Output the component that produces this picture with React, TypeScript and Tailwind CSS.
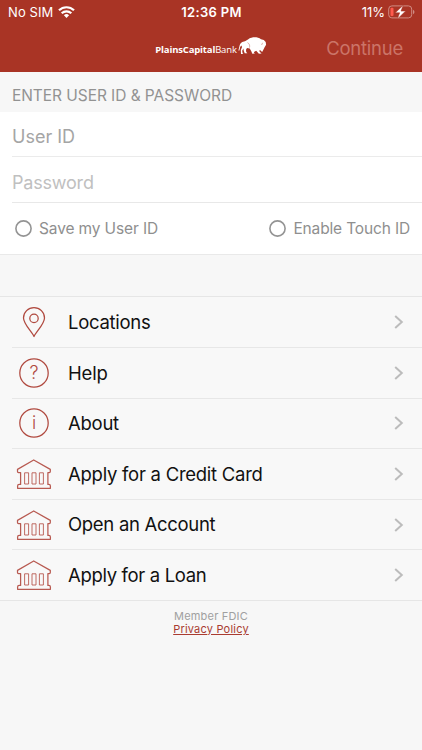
import { useState } from "react";

type MenuItem = { label: string; icon: "pin" | "help" | "info" | "bank"; text: string };

const MENU: MenuItem[] = [
  { label: "Locations", icon: "pin", text: "tracking-[-0.28px]" },
  { label: "Help", icon: "help", text: "tracking-[-0.2px]" },
  { label: "About", icon: "info", text: "tracking-[-0.25px]" },
  { label: "Apply for a Credit Card", icon: "bank", text: "tracking-[-0.26px]" },
  { label: "Open an Account", icon: "bank", text: "tracking-[-0.3px]" },
  { label: "Apply for a Loan", icon: "bank", text: "tracking-[-0.34px]" },
];

function PinIcon() {
  return (
    <svg width="24" height="32" viewBox="0 0 24 32" fill="none" stroke="#b0493f" strokeWidth="1.250" strokeLinejoin="round">
      <path d="M12 30.500C10.500 26.500 1.500 18 1.500 11.900a10.500 10.300 0 0 1 21 0C22.500 18 13.500 26.500 12 30.500Z" />
      <circle cx="12" cy="12.400" r="4.200" />
    </svg>
  );
}

function RoundIcon({ char }: { char: string }) {
  return (
    <span className="grid h-[30px] w-[30px] place-items-center text-[18px] font-light leading-none text-[#b0493f]">
      <svg className="col-start-1 row-start-1" width="30" height="30" viewBox="0 0 30 30" fill="none" stroke="#b0493f" strokeWidth="1.250">
        <circle cx="15" cy="15" r="14.200" />
      </svg>
      <span className="col-start-1 row-start-1">{char}</span>
    </span>
  );
}

function BankIcon() {
  return (
    <svg width="36" height="32" viewBox="0 0 36 32" fill="none" stroke="#b85a51" strokeWidth="1.250" strokeLinejoin="round">
      <path d="M17.700 2 34.300 11.400V13.600Q34.300 14.600 33.300 14.600H31.900V26.400H32.800Q34.400 26.400 34.400 28V30.300H1.600V28Q1.600 26.400 3.200 26.400H4.600V14.600H2.500Q1.500 14.600 1.500 13.600V11.400Z" />
      <path d="M8.600 14.800h4v11.200h-4zM16 14.800h4v11.200h-4zM23.400 14.800h4v11.200h-4z" strokeWidth="0.900" />
    </svg>
  );
}

function MenuIcon({ icon }: { icon: MenuItem["icon"] }) {
  if (icon === "pin") return <PinIcon />;
  if (icon === "help") return <RoundIcon char="?" />;
  if (icon === "info") return <RoundIcon char="i" />;
  return <BankIcon />;
}

function StatusBar() {
  return (
    <div className="grid h-6 grid-cols-3 items-center pl-[8px] pr-[7px] text-[13px] leading-none">
      <div className="flex items-center gap-[5px]">
        <span className="tracking-[0.1px]">No SIM</span>
        <svg width="17" height="12" viewBox="0 0 17 12" fill="none" stroke="white" strokeWidth="2.200">
          <path d="M1 4.300a10.800 10.800 0 0 1 15 0" />
          <path d="M3.700 7.200a7 7 0 0 1 9.600 0" />
          <path d="M8.500 12 5.900 9.300a3.700 3.700 0 0 1 5.200 0Z" fill="white" stroke="none" />
        </svg>
      </div>
      <span className="text-center font-semibold tracking-[0.3px]">12:36 PM</span>
      <div className="flex items-center justify-end gap-[3px]">
        <span>11%</span>
        <svg width="27" height="14" viewBox="0 0 27 14" fill="none">
          <rect x="0.700" y="0.900" width="23" height="12" rx="3.200" stroke="#d08c83" strokeWidth="1" />
          <rect x="2.500" y="2.700" width="3" height="8.400" rx="1" fill="#ff5a4d" />
          <path d="M25 4.800v4.400q1.500-.7 1.500-2.200T25 4.800Z" fill="#d08c83" />
          <path d="M15.200.2 7.300 7.800h4.400L9.400 14 17.600 6.100H13Z" fill="white" stroke="#a93425" strokeWidth="0.500" />
        </svg>
      </div>
    </div>
  );
}

function Logo() {
  return (
    <div className="flex items-center">
      <span className="whitespace-nowrap pt-[8px] font-['Open_Sans',sans-serif] text-[9.500px] leading-none tracking-[-0.160px]">
        <b>PlainsCapital</b>Bank
      </span>
      <svg className="ml-[1px]" width="29" height="18" viewBox="0 0 29 18">
        <path
          fill="white"
          d="M.4 13.400 1.500 9C2 6.300 3.400 4.800 6 4.400 9 4 10 1.500 13.500.7 17-.1 20.500.4 23 2.300l1.900.5.900.1L27.700 5l.4 2.800-1.500 2.500-1.500 3-1 1.700-1.700-1.700-1.400.4 1.200 1.600 1.400 1.300-2.700.2-2.700-3-1.900.9-.5.9 1.100 1-2.600.2-1-2.500-1.600-2.900-2.700-.5-1 1.800.2 2.300 1.200 1.200-2.700.1-1-2.900-.3-2-1.200 2.300.4 2.500.7.8-2.300.1L2.800 13 4 10.200 3.600 8.500 2.200 9.800 1.400 13.400Z"
        />
        <path fill="none" stroke="#a93425" strokeWidth="0.400" d="M9.500 5.600c1.900 1 2.600 2.900 2 5M24.600 5.800l-1 2.200" />
      </svg>
    </div>
  );
}

function Option({ label, text, checked, onToggle }: { label: string; text: string; checked: boolean; onToggle: () => void }) {
  return (
    <button onClick={onToggle} className="flex items-center gap-[7px]">
      <svg width="17" height="17" viewBox="0 0 17 17" fill={checked ? "#a93425" : "none"} stroke="#949494" strokeWidth="1.600">
        <circle cx="8.500" cy="8.500" r="7.600" />
      </svg>
      <span className={`text-[15.500px] leading-none text-[#8f8f8f] ${text}`}>{label}</span>
    </button>
  );
}

export default function App() {
  const [saveId, setSaveId] = useState(false);
  const [touchId, setTouchId] = useState(false);

  return (
    <div className="flex h-[750px] w-[422px] flex-col overflow-hidden bg-[#f7f7f7] font-['Inter',sans-serif]">
      <header className="h-[72px] bg-[#a93425] text-white">
        <StatusBar />
        <div className="grid h-12 grid-cols-[1fr_auto_1fr] items-center pr-[19px]">
          <div className="w-[19px]" />
          <div className="-mt-[5px] pl-[19px]">
            <Logo />
          </div>
          <span className="text-right text-[18.500px] leading-none tracking-[-0.250px] text-[#cb7468]">Continue</span>
        </div>
      </header>

      <h2 className="flex h-[40px] items-center pl-[12px] pt-[8px] text-[15.500px] leading-none tracking-[-0.060px] text-[#929292]">
        ENTER USER ID &amp; PASSWORD
      </h2>

      {/* Login form */}
      <section className="h-[143px] border-b border-[#e9e9e9] bg-white">
        <div className="ml-[12px] flex h-[45px] items-center border-b border-[#ebebeb] pt-[5px]">
          <input placeholder="User ID" className="w-full text-[18px] outline-none placeholder:text-[#a5a5a5]" />
        </div>
        <div className="ml-[12px] flex h-[46px] items-center border-b border-[#e8e8e8] pt-[5px]">
          <input type="password" placeholder="Password" className="w-full text-[18px] tracking-[-0.2px] outline-none placeholder:text-[#c0c0c0]" />
        </div>
        <div className="flex h-[51px] items-center justify-between pl-[15px] pr-[12px]">
          <Option label="Save my User ID" text="tracking-[-0.130px]" checked={saveId} onToggle={() => setSaveId(!saveId)} />
          <Option label="Enable Touch ID" text="tracking-[-0.150px]" checked={touchId} onToggle={() => setTouchId(!touchId)} />
        </div>
      </section>

      {/* Menu */}
      <nav className="mt-[41px] border-y border-[#e6e6e6] bg-[#f8f8f8]">
        {MENU.map((item, i) => (
          <div key={item.label} className={`flex items-stretch pl-[12px] ${i > 0 ? "h-[50.600px]" : "h-[50px]"}`}>
            <div className={`flex w-full items-center pr-[18px] ${i > 0 ? "border-t border-[#e7e7e7]" : ""}`}>
              <div className="flex w-[44px] justify-center">
                <MenuIcon icon={item.icon} />
              </div>
              <span className={`ml-[12px] flex-1 text-[18.500px] leading-none text-[#111111] ${item.text}`}>{item.label}</span>
              <svg width="10" height="16" viewBox="0 0 10 16" fill="none" stroke="#bcbcbc" strokeWidth="2">
                <path d="M1.200 1.900 7.800 8 1.200 14.100" />
              </svg>
            </div>
          </div>
        ))}
      </nav>

      <footer className="flex flex-col items-center pt-[9px] text-[11px] leading-[13px]">
        <span className="tracking-[0.2px] text-[#a0a0a0]">Member FDIC</span>
        <a href="#" className="tracking-[0.2px] text-[#a93c31] underline">Privacy Policy</a>
      </footer>
    </div>
  );
}
